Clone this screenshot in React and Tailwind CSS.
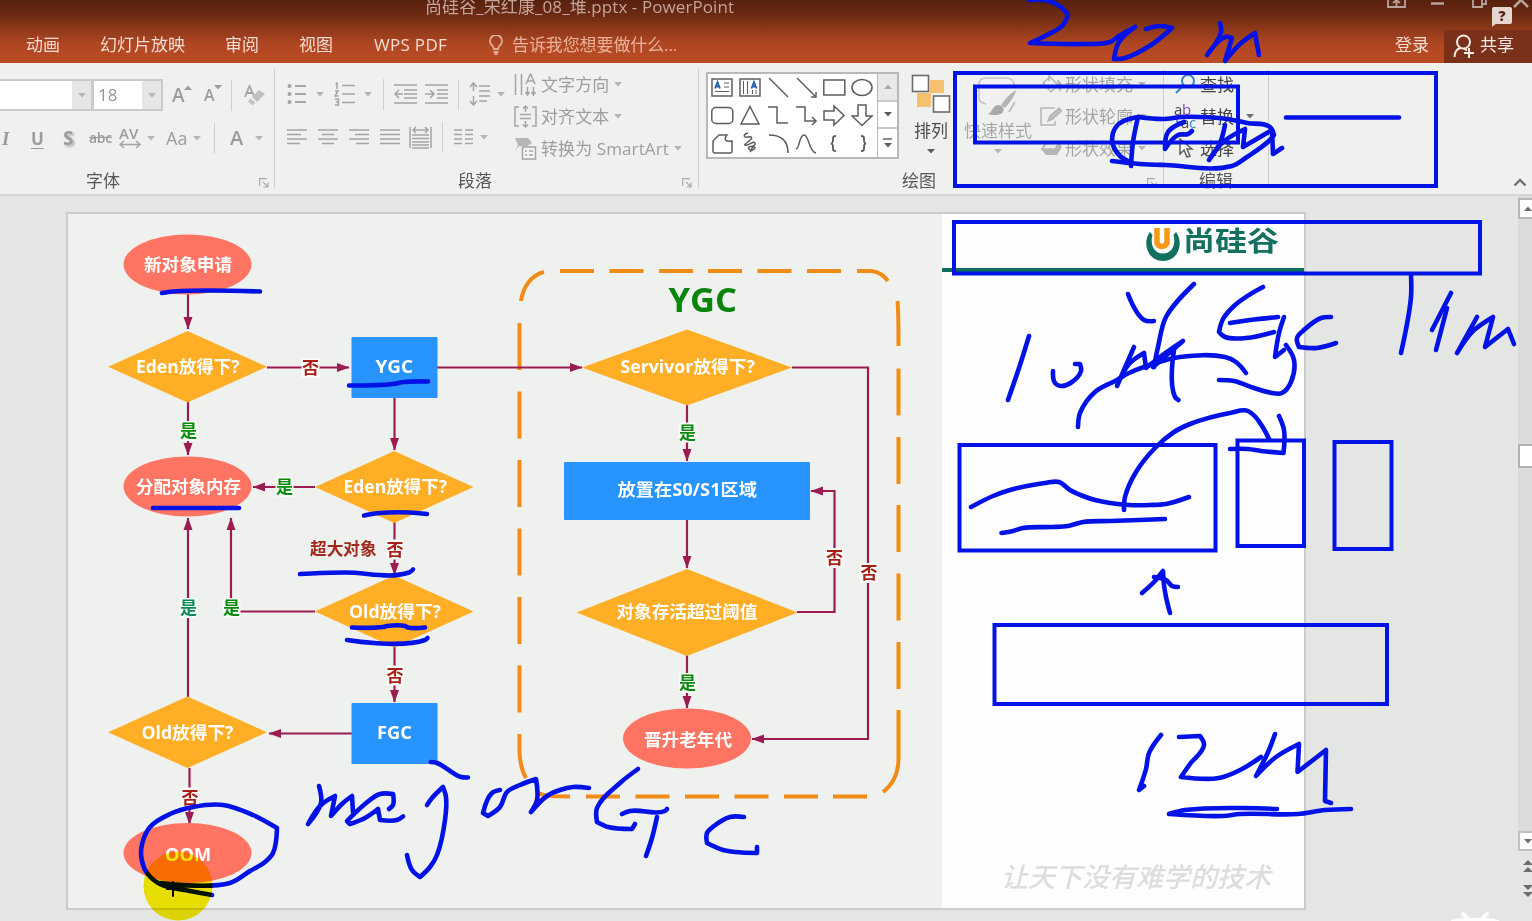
import React from "react";

const UI = "font-['Open_Sans','Noto_Sans_CJK_SC',sans-serif]";

/* ---------- small ribbon parts ---------- */
const Caret = ({ className = "", color = "#b4b6b4" }) => (
  <svg className={"shrink-0 " + className} width="8" height="5" viewBox="0 0 8 5">
    <path d="M0 0h8L4 4.6z" fill={color} />
  </svg>
);

const Sep = ({ className = "" }) => <div className={"h-[31px] w-px shrink-0 bg-[#cfd1cf] " + className} />;

const GroupSep = () => <div className="mt-[6px] h-[119px] w-px shrink-0 bg-[#cdcfcd]" />;

const Launcher = ({ className = "" }) => (
  <svg className={"mt-[5px] shrink-0 " + className} width="10" height="10" viewBox="0 0 10 10" fill="none" stroke="#a9aba9" strokeWidth="1.2">
    <path d="M.6 8V.6H8M4 4l4.5 4.5M9 4.5V9H4.5" />
  </svg>
);

const Icon = ({ w, h, className = "", children, stroke = "#a3a5a3", sw = 1.5 }) => (
  <svg className={"shrink-0 " + className} width={w} height={h} viewBox={`0 0 ${w} ${h}`} fill="none" stroke={stroke} strokeWidth={sw}>
    {children}
  </svg>
);

const Footer = ({ children }) => (
  <div className="flex h-[28px] items-center text-[17px] leading-none text-[#555755]">{children}</div>
);

/* ---------- title bar ---------- */
function TitleBar() {
  return (
    <header className="h-[63px] overflow-hidden bg-[linear-gradient(to_bottom,#57210f_0px,#6b2912_14px,#8f3a1b_30px,#b04622_44px,#ba4b24_60px)]">
      <div className="flex h-[30px] items-start">
        <div className="ml-[425px] w-[312px] text-[17px] leading-[14px] tracking-[0.08px] whitespace-nowrap text-[#c3a59b]">
          尚硅谷_宋红康_08_堆.pptx - PowerPoint
        </div>
        <Icon w={20} h={10} className="ml-[650px]" stroke="#b9a29a" sw={1.8}>
          <path d="M1 0v7h17V0M9.500 6V0M6 3l3.500-3L13 3" />
        </Icon>
        <Icon w={13} h={8} className="ml-[24px]" stroke="#b9a29a" sw={2.5}><path d="M0 3.500h13" /></Icon>
        <Icon w={15} h={9} className="ml-[28px]" stroke="#b9a29a" sw={1.8}><path d="M1 0v7h9V0M4 0M10 4h4V0" /></Icon>
        <Icon w={16} h={9} className="ml-[26px]" stroke="#b9a29a" sw={2.6}><path d="M1 7l7-7 7 7" /></Icon>
      </div>
      <div className="flex h-[33px] text-[17px] leading-[29px] whitespace-nowrap text-[#f3dcd2]">
        <div className="ml-[26px] w-[74px]">动画</div>
        <div className="w-[125px]">幻灯片放映</div>
        <div className="w-[74px]">审阅</div>
        <div className="w-[75px]">视图</div>
        <div className="w-[115px] tracking-[0.3px]">WPS PDF</div>
        <Icon w={15} h={20} className="mt-[5px]" stroke="#e2ab97" sw={1.8}>
          <path d="M5 14c0-3-4-4-4-8a6 6 0 0 1 12 0c0 4-4 5-4 8zM4.500 17h5M5.500 19h3" />
        </Icon>
        <div className="ml-[8px] w-[170px] tracking-[-0.1px] text-[#e9b29d]">告诉我您想要做什么...</div>
        <div className="ml-auto w-[49px]">登录</div>
        <div className="flex w-[88px] bg-[#7b3119] pl-[9px] text-[#f6e9e4]">
          <Icon w={23} h={25} className="mt-[4px]" stroke="#f6e9e4" sw={2}>
            <circle cx="10.500" cy="8" r="6.500" />
            <path d="M1.500 23c0-5 2.500-8 6-9M11 14.500l3 2M16 14v10M11 19h10" />
          </Icon>
          <div className="ml-[4px]">共享</div>
        </div>
      </div>
    </header>
  );
}

/* ---------- ribbon ---------- */
function FontGroup() {
  return (
    <section className="flex w-[274px] shrink-0 flex-col">
      <div className="h-[104px] pt-[16px] text-[#9b9d9b]">
        <div className="flex h-[32px] items-center">
          <div className="flex h-[32px] w-[93px] border-2 border-l-0 border-[#c9cbc9] bg-white">
            <div className="ml-auto flex w-[19px] items-center justify-center bg-[#e5e7e5]"><Caret /></div>
          </div>
          <div className="flex h-[32px] w-[70px] items-center border-2 border-l border-[#c9cbc9] bg-white pl-[4px] text-[17px] text-[#8f979f]">
            18
            <div className="ml-auto flex h-full w-[19px] items-center justify-center bg-[#e5e7e5]"><Caret /></div>
          </div>
          <div className="ml-[9px] flex w-[19px] items-center text-[19px] font-semibold">A<Caret className="-mt-4 -ml-px rotate-180" color="#9b9d9b" /></div>
          <div className="ml-[13px] flex w-[19px] items-center text-[16px] font-semibold">A<Caret className="-mt-4 -ml-px" color="#9b9d9b" /></div>
          <Sep className="ml-[8px]" />
          <Icon w={21} h={24} className="ml-[12px]">
            <path d="M1 14L5.500 3 10 13M2.500 10h6" strokeWidth="1.800" />
            <path d="M8 14l7-7 6 4-8 8z" fill="#bfc1bf" stroke="none" />
            <path d="M5 17l5 4" strokeWidth="4" stroke="#c3c5c3" />
          </Icon>
        </div>
        <div className="mt-[11px] flex h-[32px] items-center leading-none">
          <span className="w-[31px] pl-[2px] font-['Liberation_Serif',serif] text-[19px] font-bold italic">I</span>
          <span className="w-[32px] text-[17px] font-bold underline underline-offset-[3px]">U</span>
          <span className="w-[26px] text-[19px] font-bold [text-shadow:2px_2px_2px_#bbb]">S</span>
          <span className="w-[30px] text-[14px] font-semibold tracking-[-0.3px] line-through">abc</span>
          <span className="flex w-[28px] flex-col">
            <span className="text-[15px] leading-[13px] font-semibold">AV</span>
            <Icon w={23} h={9}><path d="M1 4.500h20M5 1L1 4.500 5 8M17 1l4 3.500L17 8" /></Icon>
          </span>
          <Caret className="mr-[11px]" />
          <span className="w-[27px] text-[18px]">Aa</span>
          <Caret className="mr-[13px]" />
          <Sep className="mr-[15px]" />
          <span className="w-[25px] text-[20px] font-semibold">A</span>
          <Caret />
        </div>
      </div>
      <Footer><span className="pl-[86px]">字体</span><Launcher className="mr-[5px] ml-auto" /></Footer>
    </section>
  );
}

function ParagraphGroup() {
  const tools = [
    ["文字方向", <><path d="M1.500 1v21M7.500 1v21M13.500 14v7M19.500 14v7M11.500 19l2 3 2-3M17.500 19l2 3 2-3" /><path d="M12 11l4.500-10L21 11M13.500 8h6" /></>],
    ["对齐文本", <><path d="M5 2H1v19h4M18 2h4v19h-4M11.500 1v6M9 3.500L11.500 1 14 3.500M11.500 16v6M9 19.500l2.500 2.500 2.500-2.500M6 9.500h11M6 13.500h11" /></>],
    ["转换为 SmartArt", <><path d="M1 1h13l4 5-5 3H5l-4 5 3-6z" fill="#b5b7b5" stroke="none" /><rect x="8.500" y="10" width="13" height="12" fill="#f4f6f4" /><path d="M11 14h2M15 14h4M11 18h2M15 18h4" /></>],
  ];
  return (
    <section className="flex w-[423px] shrink-0 flex-col">
      <div className="flex h-[104px]">
        <div className="w-[239px] pt-[14px] pl-[12px]">
          <div className="flex h-[34px] items-center">
            <Icon w={20} h={22} className="mr-[9px]">
              <g fill="#a3a5a3" stroke="none"><circle cx="2.500" cy="3" r="2" /><circle cx="2.500" cy="11" r="2" /><circle cx="2.500" cy="19" r="2" /></g>
              <path d="M8 3h11M8 11h11M8 19h11" strokeWidth="1.800" />
            </Icon>
            <Caret className="mr-[10px]" />
            <Icon w={22} h={24} className="mr-[8px]">
              <path d="M1.500 2L3 1v6M1 9h3l-3 5h3.500M1 17h3.500v6H1M2 20h2.500M8 3.500h13M8 12h13M8 20.500h13" />
            </Icon>
            <Caret className="mr-[11px]" />
            <Sep className="mr-[10px]" />
            <Icon w={24} h={20} className="mr-[7px]"><path d="M0 1h23M10 6h13M10 10h13M10 14h13M0 19h23M1 10h8M5 6l-4 4 4 4" /></Icon>
            <Icon w={24} h={20} className="mr-[9px]"><path d="M0 1h23M12 6h11M12 10h11M12 14h11M0 19h23M0 10h8M5 6l4 4-4 4" /></Icon>
            <Sep className="mr-[10px]" />
            <Icon w={21} h={24} className="mr-[7px]"><path d="M4.500 1v8M1 5l3.500-4L8 5M4.500 14v9M1 19l3.500 4L8 19M10 4h11M10 9h11M10 14h11M10 19h8" /></Icon>
            <Caret />
          </div>
          <div className="mt-[10px] flex h-[32px] items-center">
            <Icon w={20} h={16} className="mr-[11px]"><path d="M0 1h20M0 5.500h14M0 10h20M0 14.500h13" /></Icon>
            <Icon w={20} h={16} className="mr-[11px]"><path d="M0 1h20M4 5.500h12M0 10h20M4 14.500h12" /></Icon>
            <Icon w={20} h={16} className="mr-[11px]"><path d="M0 1h20M6 5.500h14M0 10h20M7 14.500h13" /></Icon>
            <Icon w={20} h={16} className="mr-[9px]"><path d="M0 1h20M0 5.500h20M0 10h20M0 14.500h20" /></Icon>
            <Icon w={23} h={23} className="mr-[10px]"><path d="M1 1v21M22 1v21M4 4h15M7 1L4 4l3 3M16 1l3 3-3 3M3 9h17M3 12.500h17M3 16h17M3 19h17M3 22h17" /></Icon>
            <Sep className="mr-[11px]" />
            <Icon w={20} h={16} className="mr-[6px]"><path d="M0 1h8M0 5.500h8M0 10h8M0 14.500h8M11 1h8M11 5.500h8M11 10h8M11 14.500h8" /></Icon>
            <Caret />
          </div>
        </div>
        <div className="pt-[5px] text-[17px] whitespace-nowrap text-[#9c9e9c]">
          {tools.map(([t, icon]) => (
            <div key={t} className="flex h-[32px] items-center leading-none">
              <Icon w={23} h={23}>{icon}</Icon>
              <span className="mr-[5px] ml-[4px] tracking-[0.1px]">{t}</span>
              <Caret />
            </div>
          ))}
        </div>
      </div>
      <Footer><span className="pl-[183px]">段落</span><Launcher className="mr-[6px] ml-auto" /></Footer>
    </section>
  );
}

const SHAPES = [
  <g><rect x="1" y="3" width="20" height="17" /><path d="M13 7h5M13 11h5M4 15.500h14" strokeWidth="1" /><path d="M4 12.500l2.500-6.500L9 12.500M5 10.500h3" stroke="#2560ae" strokeWidth="1.800" /></g>,
  <g><rect x="1" y="3" width="20" height="17" /><path d="M4.500 5v13M8.500 5v13M13.500 14v4M17 14v4" strokeWidth="1" /><path d="M12.500 12.500L15 6l2.500 6.500M13.500 10.500h3" stroke="#2560ae" strokeWidth="1.800" /></g>,
  <path d="M2 2l19 19" />,
  <path d="M2 2l19 19M21 16v5h-5" />,
  <rect x="0.800" y="4" width="21" height="15" />,
  <ellipse cx="11" cy="11.500" rx="10" ry="8" />,
  <rect x="0.800" y="3.500" width="21" height="16" rx="4" />,
  <path d="M11 2.500L20 20H2z" />,
  <path d="M1 3h9v16h11" />,
  <path d="M1 3h9v14h11M17 13l4 4-4 4" />,
  <path d="M1 7h10V2l10 9.500L11 21v-5H1z" />,
  <path d="M7 1h8v11h6L11 21.500 1 12h6z" />,
  <path d="M2 19V9l6-6h8c-4 5-1 7 5 6v10c0 1-1 2-2 2H4c-1 0-2-1-2-2z" />,
  <path d="M9 1C3 3 5 6 9 5s5 1 1 4-6 5-2 4 8-5 8-1-9 1-6 5 8-2 5-2-2 4-4 5" />,
  <path d="M2 3c11 0 19 5 19 18" />,
  <path d="M1 17C5 16 4 3 9 3s5 17 12 18" />,
  <path d="M13 4c-3 0-3 1-3 3.500s0 3.500-2 4c2 .500 2 1.500 2 4s0 3.500 3 3.500" strokeWidth="1.900" />,
  <path d="M10 4c3 0 3 1 3 3.500s0 3.500 2 4c-2 .500-2 1.500-2 4s0 3.500-3 3.500" strokeWidth="1.900" />,
];

function DrawingGroup() {
  const tools = [
    ["形状填充", <><path d="M3 10l7-6 8 8-7 7zM9 8V1" /><path d="M18 8c4 2 4 6 2 9z" fill="#b5b7b5" /></>],
    ["形状轮廓", <><path d="M15 3H1v17h14v-4" /><path d="M8 16l2-5 9-8 2.500 3-9 8z" fill="#c0c2c0" /></>],
    ["形状效果", <><path d="M6 5h13l3 5-5 8H6l-5-6z" fill="#b5b7b5" stroke="none" /><path d="M7 5h12l-4 7H2z" fill="#e9ebe9" /></>],
  ];
  return (
    <section className="flex w-[464px] shrink-0 flex-col">
      <div className="flex h-[104px]">
        <div className="mt-[9px] ml-[7px] flex h-[87px] w-[193px] border-2 border-[#b7b9b7] bg-white">
          <div className="grid flex-1 grid-cols-6 grid-rows-3 place-items-center">
            {SHAPES.map((s, i) => (
              <Icon key={i} w={23} h={23} stroke="#5c5e5c" sw={1.5}>{s}</Icon>
            ))}
          </div>
          <div className="grid w-[20px] grid-rows-3 divide-y-2 divide-[#c9cbc9] border-l border-[#b7b9b7]">
            <div className="flex items-center justify-center bg-[#e8eae8]"><Caret className="rotate-180" color="#a9aba9" /></div>
            <div className="flex items-center justify-center"><Caret color="#5c5e5c" /></div>
            <div className="flex flex-col items-center justify-center gap-[3px]"><div className="h-[2px] w-[9px] bg-[#8a8c8a]" /><Caret color="#5c5e5c" /></div>
          </div>
        </div>
        <div className="mt-[11px] ml-[11px] flex w-[42px] flex-col items-center text-[17px] leading-none text-[#4c4e4c]">
          <Icon w={40} h={40} stroke="#6a6c6a" sw={1.6}>
            <path d="M19 6h14v13H19zM6 19h14v14H6z" fill="#f3c170" stroke="none" />
            <rect x="1.500" y="1.500" width="16" height="16" fill="#fff" />
            <rect x="22.500" y="22" width="16" height="16" fill="#fff" />
          </Icon>
          <span className="mt-[8px] whitespace-nowrap">排列</span>
          <Caret className="mt-[10px]" color="#5c5e5c" />
        </div>
        <div className="mt-[13px] ml-[12px] flex w-[68px] flex-col items-center text-[17px] leading-none text-[#a6a8a6]">
          <Icon w={44} h={42} stroke="#c5c7c5" sw={1.6}>
            <path d="M10 28C3 26 3 24 3 20V9c0-5 3-7 7-7h20c5 0 8 3 8 7v3" fill="#f3f1f7" />
            <path d="M42 12c-6 3-13 9-18 17l5 4c6-6 11-14 13-21z" fill="#b3b5b3" stroke="#eff1ef" />
            <path d="M12 38c4-1 4-9 11-9 6 1 7 9-2 10-4 0-6 0-9-1z" fill="#a9aba9" stroke="none" />
            <path d="M33 36l6-10" stroke="#b9bbb9" />
          </Icon>
          <span className="mt-[4px] whitespace-nowrap">快速样式</span>
          <Caret className="mt-[10px]" />
        </div>
        <div className="ml-[8px] pt-[5px] text-[17px] text-[#a3a5a3]">
          {tools.map(([t, icon]) => (
            <div key={t} className="flex h-[32px] items-center leading-none whitespace-nowrap">
              <Icon w={23} h={22} stroke="#b5b7b5">{icon}</Icon>
              <span className="mr-[5px] ml-[2px]">{t}</span>
              <Caret />
            </div>
          ))}
        </div>
      </div>
      <Footer><span className="pl-[203px]">绘图</span><Launcher className="mr-[6px] ml-auto" /></Footer>
    </section>
  );
}

function EditGroup() {
  return (
    <section className="flex w-[104px] shrink-0 flex-col">
      <div className="h-[104px] pt-[5px] text-[17px] leading-none text-[#444644]">
        <div className="flex h-[32px] items-center pl-[10px]">
          <Icon w={22} h={22} stroke="#3b82c8" sw={2}><circle cx="14" cy="8" r="6" /><path d="M9 13l-7 7" /></Icon>
          <span className="ml-[4px]">查找</span>
        </div>
        <div className="flex h-[32px] items-center pl-[10px]">
          <div className="flex w-[24px] flex-col text-[15px] tracking-tight">
            <div className="h-[13px] leading-[12px]">a<span className="text-[#7d4bb0]">b</span></div>
            <div className="flex h-[13px] pl-[2px] leading-[12px]">
              <Icon w={5} h={8} className="mt-px" stroke="#3b82c8"><path d="M1 0v5h4" /></Icon>
              a<span className="text-[#3b82c8]">c</span>
            </div>
          </div>
          <span className="ml-[2px]">替换</span>
          <Caret className="ml-[12px]" color="#6c6e6c" />
        </div>
        <div className="flex h-[32px] items-center pl-[14px]">
          <Icon w={16} h={22} stroke="#5c5e5c"><path d="M2 2v15l4-4 3 7 3-1-3-7h5z" fill="#fff" /></Icon>
          <span className="ml-[6px]">选择</span>
        </div>
      </div>
      <Footer><span className="pl-[35px]">编辑</span></Footer>
    </section>
  );
}

function Ribbon() {
  return (
    <div className="flex h-[133px] overflow-hidden border-b-2 border-[#d5d7d5] bg-[#eff1ef]">
      <FontGroup />
      <GroupSep />
      <ParagraphGroup />
      <GroupSep />
      <DrawingGroup />
      <GroupSep />
      <EditGroup />
      <GroupSep />
      <Icon w={14} h={9} className="mt-auto mr-[5px] mb-[7px] ml-auto" stroke="#6f716f" sw={2.4}><path d="M1.500 7.500L7 2l5.500 5.500" /></Icon>
    </div>
  );
}

/* ---------- flow chart ---------- */
const MAROON = "#9c1b50";

const Txt = ({ x1, x2, y, s = 17.5, fill = "#fff", w = 700, children }) => (
  <text x={x1} y={y + s * 0.37} textLength={x2 - x1} lengthAdjust="spacingAndGlyphs" fontSize={s} fontWeight={w} fill={fill}>{children}</text>
);
const Diamond = ({ x1, x2, y1, y2 }) => (
  <path d={`M${x1} ${(y1 + y2) / 2}L${(x1 + x2) / 2} ${y1}L${x2} ${(y1 + y2) / 2}L${(x1 + x2) / 2} ${y2}z`} fill="#ffae26" />
);
const Oval = ({ cx, cy }) => <ellipse cx={cx} cy={cy} rx="64" ry="30" fill="#ff7462" />;
const Tag = ({ x, y, no, teal }) => (
  <g>
    <rect x={x - 9} y={y - 10} width="18" height="20" fill="#f8faf7" />
    <Txt x1={x - 8.5} x2={x + 8.5} y={y} s={17} fill={no ? "#a81f17" : teal ? "#0a8a58" : "#078a0c"}>{no ? "否" : "是"}</Txt>
  </g>
);

const ARROWS = [
  "M188 293V329", "M188 402V455", "M267 367.500H349", "M437 367.500H582", "M394.500 398V450",
  "M315 487H253", "M394.500 522V575", "M315 611.500H231V518", "M188 697V518", "M394.500 647V702",
  "M352 733.500H269", "M189.500 768V824", "M687 404V461", "M687 519V568", "M687 655V708",
  "M797 612H834.500V491H811", "M792 367.500H868V739H752",
];
const DASHES = [
  "M521 301C523 286 532 275 544 272", "M857 271h14C880 272 884 276 888 281", "M897.500 301C898 306 898.500 312 898.500 346",
  "M519.500 734V752C520 764 522 771 526 778", "M538 793C545 796 552 796.500 570 796.500", "M898.500 710V760C898 776 892 785 883 792",
  "M560 271h34M609.500 271h34M659 271h34M708 271h34M757.500 271h34M807 271h34",
  "M586 796.500h34M635.500 796.500h34M685 796.500h34M734.500 796.500h34M784 796.500h34M833 796.500h34",
  "M519.500 323v47M519.500 391.500v47M519.500 460v47M519.500 528.500v47M519.500 597v47M519.500 665.500v47",
  "M898.500 368.500v47M898.500 437v47M898.500 505v47M898.500 573.500v47M898.500 642v47",
];

function FlowChart() {
  return (
    <svg className="block h-[695px] w-[874px] shrink-0" viewBox="68 214 874 695">
      <defs>
        <marker id="head" markerUnits="userSpaceOnUse" markerWidth="13" markerHeight="10" refX="12" refY="5" orient="auto">
          <path d="M0 .500L12.500 5 0 9.500z" fill={MAROON} />
        </marker>
      </defs>
      <g fill="none" stroke="#f28c18" strokeWidth="4">
        {DASHES.map((d) => <path key={d} d={d} />)}
      </g>
      <g fill="none" stroke={MAROON} strokeWidth="2.200">
        {ARROWS.map((d) => <path key={d} d={d} markerEnd="url(#head)" />)}
      </g>
      <Oval cx={187.500} cy={264.500} /><Oval cx={187.500} cy={486.500} /><Oval cx={187.500} cy={853} /><Oval cx={687} cy={738.500} />
      <Diamond x1={108} x2={267} y1={331} y2={402.500} />
      <Diamond x1={315} x2={473.500} y1={451} y2={523} />
      <Diamond x1={315} x2={473.500} y1={575.500} y2={647.500} />
      <Diamond x1={108} x2={267} y1={696.500} y2={768} />
      <Diamond x1={582} x2={792} y1={329.500} y2={405.500} />
      <Diamond x1={576.500} x2={797.500} y1={569} y2={656} />
      <g fill="#2894ff">
        <rect x="351.500" y="337" width="86" height="61" rx="1" />
        <rect x="351.500" y="703" width="86" height="61" rx="1" />
        <rect x="564" y="462" width="246" height="58" rx="1" />
      </g>
      <Txt x1={144} x2={232} y={264.500}>新对象申请</Txt>
      <Txt x1={136} x2={239.500} y={367}>Eden放得下?</Txt>
      <Txt x1={136} x2={241} y={486.500}>分配对象内存</Txt>
      <Txt x1={343.500} x2={447} y={487}>Eden放得下?</Txt>
      <Txt x1={349} x2={441} y={612}>Old放得下?</Txt>
      <Txt x1={141.500} x2={233.500} y={733}>Old放得下?</Txt>
      <Txt x1={375.500} x2={413} y={366.500}>YGC</Txt>
      <Txt x1={377} x2={412} y={732.500}>FGC</Txt>
      <Txt x1={165} x2={211} y={854.500}>OOM</Txt>
      <Txt x1={620.500} x2={755} y={367}>Servivor放得下?</Txt>
      <Txt x1={617.500} x2={757} y={490}>放置在S0/S1区域</Txt>
      <Txt x1={616.500} x2={757.500} y={612}>对象存活超过阈值</Txt>
      <Txt x1={644} x2={732} y={739.500}>晋升老年代</Txt>
      <Txt x1={668.500} x2={737} y={299.500} s={34} fill="#0a850c">YGC</Txt>
      <Txt x1={310} x2={376.500} y={548.500} s={16.500} fill="#a02a1c">超大对象</Txt>
      <Tag x={188.500} y={431} /><Tag x={284.500} y={487} /><Tag x={188.500} y={608} teal /><Tag x={231.500} y={608} />
      <Tag x={687.500} y={432.500} /><Tag x={687.500} y={683} />
      <Tag x={310.500} y={368} no /><Tag x={395} y={549.500} no /><Tag x={395} y={675.500} no /><Tag x={190} y={797.500} no />
      <Tag x={834.500} y={558} no /><Tag x={869} y={573} no />
    </svg>
  );
}

function Slide() {
  return (
    <div className="mt-[16px] ml-[66px] flex h-[698px] w-[1240px] shrink-0 border-2 border-[#cacccb] bg-[#eff1ef]">
      <FlowChart />
      <div className="flex flex-1 flex-col bg-[#fdfefd]">
        <div className="flex h-[58px] items-center border-b-4 border-[#0c6d5c] pl-[203px]">
          <svg className="shrink-0" width="36" height="39" viewBox="0 0 36 39">
            <path d="M5 10C-3 20 2 39 18 39S39 20 31 10L28.500 13C31 21 28 31.500 18 31.500S5 21 7.500 13z" fill="#12705f" />
            <path d="M12 6v15a5.500 6 0 0 0 10 0V6" fill="none" stroke="#f79a16" strokeWidth="5.500" />
          </svg>
          <svg className="ml-[2px] shrink-0" width="98" height="42" viewBox="0 0 98 42">
            <text x="0" y="31" textLength="96" lengthAdjust="spacingAndGlyphs" fontSize="27" fontWeight="700" fill="#14705f">尚硅谷</text>
          </svg>
        </div>
        <div className="mt-auto mr-auto mb-[14px] ml-[59px] font-['Noto_Sans_CJK_SC',sans-serif] text-[27px] leading-[36px] font-medium whitespace-nowrap text-[#dcdddc] italic">
          让天下没有难学的技术
        </div>
      </div>
    </div>
  );
}

function ScrollBar() {
  return (
    <div className="ml-auto flex w-[14px] flex-col overflow-hidden bg-[#dadcda] pt-[2px]">
      <div className="flex h-[21px] w-[20px] shrink-0 items-center border-2 border-[#b5b7b5] bg-white pl-[4px]"><Caret className="rotate-180" color="#6c6e6c" /></div>
      <div className="mt-[225px] h-[24px] w-[20px] shrink-0 border-2 border-[#b0b2b0] bg-white" />
      <div className="mt-[363px] flex h-[20px] w-[20px] shrink-0 items-center border-2 border-[#c0c2c0] bg-white pl-[4px]"><Caret color="#6c6e6c" /></div>
      <div className="flex flex-1 flex-col gap-[11px] bg-[#e4e6e4] pt-[8px] pl-[5px]">
        <Icon w={11} h={14}><path d="M0 6l5-5 5 5zM0 13l5-5 5 5z" fill="#6c6e6c" stroke="none" /></Icon>
        <Icon w={11} h={14}><path d="M0 1l5 5 5-5zM0 8l5 5 5-5z" fill="#6c6e6c" stroke="none" /></Icon>
      </div>
    </div>
  );
}

/* ---------- pen annotations ---------- */
const STROKES = [
  "1029,0 1049,1 1061,7 1068,15 1063,25 1047,35 1030,43 1083,44 1110,42 1119,36 1135,27 1119,42 1114,59 1125,58 1151,45 1172,28 1160,26 1146,29",
  "1220,23 1221,32 1207,55 1225,37 1232,38 1225,61 1240,44 1255,33 1259,55",
  "1286,117.5 1399,117.5",
  "1138,117 1163,119 1182,117 1200,117 1227,119 1247,123 1270,127 1274,135 1270,140 1247,157 1232,166 1165,165 1140,164 1112,161",
  "1138,117 1120,123 1113,133 1113,145 1120,156 1132,163",
  "1138,117 1133,142 1131,166",
  "1184,122 1168,132 1165,149 1178,135 1188,134 1192,131",
  "1225,125 1220,143 1209,160 1223,142 1245,129 1243,147 1272,130 1273,154 1282,148",
  "1128,294 1144,320 1154,321",
  "1194,284 1166,317 1158,347 1154,367",
  "1263,287 1249,295 1234,306 1223,319 1219,332 1225,337 1246,338 1274,332",
  "1230,323 1250,320 1278,317",
  "1284,317 1279,333 1275,357 1284,350",
  "1331,317 1321,318 1304,330 1297,338 1299,347 1317,348 1336,343",
  "1411,275 1411,297 1401,353",
  "1451,293 1432,330", "1447,308 1436,350",
  "1477,317 1457,353 1472,332 1493,317 1485,347 1508,329 1514,344",
  "1029,336 1020,365 1008,400",
  "1053,371 1055,383 1061,386 1072,382 1081,371 1080,364 1075,364",
  "1134,347 1117,386 1129,364 1144,353 1146,368 1160,357 1183,341 1153,367",
  "1174,350 1175,397 1178.5,400",
  "1078,427 1080,413 1095,392 1117,380 1129,373 1166,360 1180,357 1225,357 1236,362 1246,373",
  "1219,380 1234,381 1254,388 1272,393 1282,393 1291,382 1294,360 1286,345",
  "1124,510 1125,497 1136,472 1155,448 1174,432 1190,424 1212,417 1230,413 1248,411 1269,439",
  "1279,416 1284,430 1283.5,453 1261,451 1248,449 1230,449",
  "971,507 993,496 1010,490 1027,486 1045,483 1059,482 1070,490 1083,496 1095,500 1110,503 1129,505 1150,505 1166,504 1189,497",
  "1001.5,533 1013,531 1023,528 1052,527 1068,526 1083,522 1110,521 1165,519",
  "1142,593 1154,582 1163,571 1164,585 1166,597 1170,613",
  "1154,577 1166,580 1172,586 1178,587",
  "1161,735 1149,753 1146,769 1139,790 1144,786",
  "1179,737 1200,736 1204,745 1190,764 1181,777 1219,778 1242,769 1261,757",
  "1275,734 1269,750 1256,776 1276,757 1299,744 1297.5,772 1326,750 1325,801 1331,803",
  "1169,814 1185,810 1277,809", "1170,814 1223,816 1240,814 1298,814 1325,810 1351,809",
  "162,293 173,291.5 260,291.5", "349,385.5 393,384 404,382 428,381.5", "153,508 239,508",
  "364,515.5 380,513 410,512.5 427,514", "300,574 320,573 345,572.5 409,572.5 413,569.5",
  "352,627.5 383,627 387,626 405,626 408,627.5 425,627.5", "347,640 425,640 427.5,638",
  "431,762 437,763 461,777 468,777.5",
  "319,786 321,803 308,824 321,805 335,796 331,816 343,803 352,796 353,812",
  "389,809 393,805 393,794 380,794 365,804 347,821 350,824 365,818 378,809 380,820 397,820 403,816.5",
  "427,805 432,798 443,787 446,797 445,820 437,855 430,867 420,877 412,870 407,855",
  "500,790 492,793 483,813 488,816 500,807 507,792 520,785 536,779 537,800 531,812 547,796 560,790 573,787 589,788",
  "638,769 620,783 597,808 597,822 608,827 632,829 635,824",
  "622,814 630,811 665,811 667,809", "657,817 652,838 646,856",
  "744,817 730,817 714,826 707,833 707,843 723,850 735,852 757,853 757,847",
  "212,895 190,891 160,884 147,873 142,861 141.5,847 150,827 170,814 193,807 223,805 253,815 277,828 273,853 265,862 250,871 230,883 160,883",
];
const BOXES = [
  [955, 73, 481, 113], [975, 86.5, 263, 56], [954, 222, 526, 51.5], [959.5, 445, 256, 105.5],
  [1237.500, 440.5, 66.500, 105.500], [1334.500, 442, 57, 107], [994.500, 625, 392.500, 79],
];

/* Smooth curve through the pen samples; vertices with a sharp turn stay corners. */
function penPath(samples) {
  const p = samples.split(" ").map((s) => s.split(",").map(Number));
  const tan = p.map((q, i) => {
    if (i === 0 || i === p.length - 1) return [0, 0];
    const a = [q[0] - p[i - 1][0], q[1] - p[i - 1][1]];
    const b = [p[i + 1][0] - q[0], p[i + 1][1] - q[1]];
    const la = Math.hypot(...a), lb = Math.hypot(...b);
    if ((a[0] * b[0] + a[1] * b[1]) / (la * lb) < 0.45) return [0, 0];
    const v = [a[0] / la + b[0] / lb, a[1] / la + b[1] / lb];
    const l = Math.hypot(...v);
    return [v[0] / l, v[1] / l];
  });
  let d = `M${p[0]}`;
  for (let i = 1; i < p.length; i++) {
    const k = Math.hypot(p[i][0] - p[i - 1][0], p[i][1] - p[i - 1][1]) / 3;
    d += `C${p[i - 1][0] + tan[i - 1][0] * k},${p[i - 1][1] + tan[i - 1][1] * k} ${p[i][0] - tan[i][0] * k},${p[i][1] - tan[i][1] * k} ${p[i]}`;
  }
  return d;
}

function Ink() {
  return (
    <svg className="pointer-events-none absolute inset-0" width="1532" height="921" viewBox="0 0 1532 921" fill="none" stroke="#0012e6" strokeWidth="4.600" strokeLinejoin="round" strokeLinecap="round">
      {STROKES.map((p) => <path key={p} d={penPath(p)} />)}
      <g strokeLinejoin="miter" strokeWidth="4">
        {BOXES.map(([x, y, w, h]) => <rect key={`${x}-${y}`} x={x} y={y} width={w} height={h} />)}
      </g>
      <path d="M173 882v14M167 889h12" stroke="#000" strokeWidth="2" />
    </svg>
  );
}

export default function App() {
  return (
    <div className={"relative flex h-[921px] w-[1532px] flex-col overflow-hidden bg-[#e4e6e4] " + UI}>
      <TitleBar />
      <Ribbon />
      <main className="flex min-h-0 flex-1">
        <Slide />
        <ScrollBar />
      </main>
      <Ink />
      <svg className="pointer-events-none absolute top-[851px] left-[143px] mix-blend-multiply" width="70" height="70" viewBox="0 0 70 70">
        <circle cx="35" cy="35" r="34.500" fill="#f7ea00" />
      </svg>
      <div className="absolute top-[7px] left-[1492px] flex h-[17px] w-[20px] items-center justify-center rounded-[2px] rounded-bl-none bg-[#e6d6d2] text-[14px] leading-none font-extrabold text-[#542015]">
        ?
        <svg className="absolute top-[16px] left-0" width="5" height="4" viewBox="0 0 5 4"><path d="M0 0h5L0 4z" fill="#e6d6d2" /></svg>
      </div>
      <svg className="absolute top-[909px] left-[1448px]" width="54" height="12" viewBox="0 0 54 12" fill="none" stroke="#fbfcfb" strokeWidth="4" strokeLinecap="round">
        <path d="M15 5l7 7M39 5l-7 7M4 13c5-2 8-2 12-2h22c4 0 7 0 12 2" />
      </svg>
    </div>
  );
}
